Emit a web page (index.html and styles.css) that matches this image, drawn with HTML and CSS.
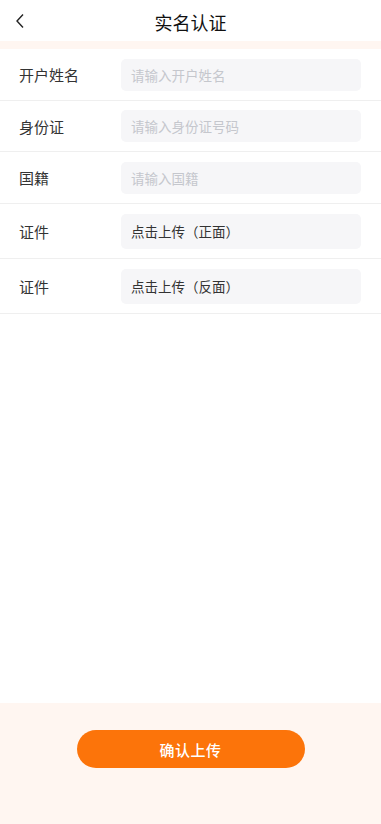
FILE: index.html
```html
<!DOCTYPE html>
<html lang="zh-CN">
<head>
<meta charset="utf-8">
<meta name="viewport" content="width=device-width, initial-scale=1">
<title>实名认证</title>
<link rel="stylesheet" href="styles.css">
</head>
<body>
<div class="page">
  <header class="nav">
    <span class="back">
      <svg width="10" height="16" viewBox="0 0 10 16"><path d="M8 1.5 L2 8 L8 14.5" fill="none" stroke="#222" stroke-width="1.4"/></svg>
    </span>
    <h1 class="title">实名认证</h1>
  </header>
  <div class="strip"></div>
  <main class="form">
    <div class="row">
      <div class="label">开户姓名</div>
      <div class="field placeholder">请输入开户姓名</div>
    </div>
    <div class="row">
      <div class="label">身份证</div>
      <div class="field placeholder">请输入身份证号码</div>
    </div>
    <div class="row">
      <div class="label">国籍</div>
      <div class="field placeholder">请输入国籍</div>
    </div>
    <div class="row row-tall">
      <div class="label">证件</div>
      <div class="field upload">点击上传（正面）</div>
    </div>
    <div class="row row-tall">
      <div class="label">证件</div>
      <div class="field upload">点击上传（反面）</div>
    </div>
  </main>
  <footer class="footer">
    <button class="submit">确认上传</button>
  </footer>
</div>
</body>
</html>
```
FILE: styles.css
```css
* { box-sizing: border-box; }
html, body { margin: 0; padding: 0; }
body {
  font-family: "Noto Sans CJK SC", "Noto Sans", sans-serif;
  color: #333;
  background: #fff;
}
.page {
  height: 100vh;
  display: flex;
  flex-direction: column;
}
.nav {
  height: 41px;
  display: flex;
  align-items: center;
  justify-content: center;
  position: relative;
}
.back {
  position: absolute;
  left: 15px;
  top: 13px;
  width: 10px;
  height: 16px;
  display: flex;
}
.title {
  margin: 0;
  font-size: 18px;
  font-weight: 400;
  color: #111;
  line-height: 1;
  padding-top: 2px;
}
.strip {
  height: 8px;
  background: #fff6f1;
}
.form {
  flex: 1;
}
.row {
  display: flex;
  align-items: center;
  padding: 9.5px 20px 9px 19px;
  border-bottom: 1px solid #efefef;
}
.row-tall {
  padding-top: 10px;
  padding-bottom: 9px;
}
.label {
  width: 102px;
  font-size: 15px;
  color: #333;
}
.field {
  flex: 1;
  height: 32px;
  border-radius: 5px;
  background: #f6f6f8;
  display: flex;
  align-items: center;
  padding-left: 10px;
  font-size: 13.5px;
}
.row-tall .field { height: 35px; }
.placeholder { color: #c5c7cd; }
.upload { color: #333; }
.footer {
  height: 121px;
  background: #fff6f1;
  display: flex;
  justify-content: center;
  padding-top: 27px;
}
.submit {
  width: 228px;
  height: 38px;
  border: none;
  border-radius: 19px;
  background: #fc740a;
  color: #fff;
  font-family: inherit;
  font-size: 15px;
  font-weight: 500;
  letter-spacing: 0.5px;
}
```
